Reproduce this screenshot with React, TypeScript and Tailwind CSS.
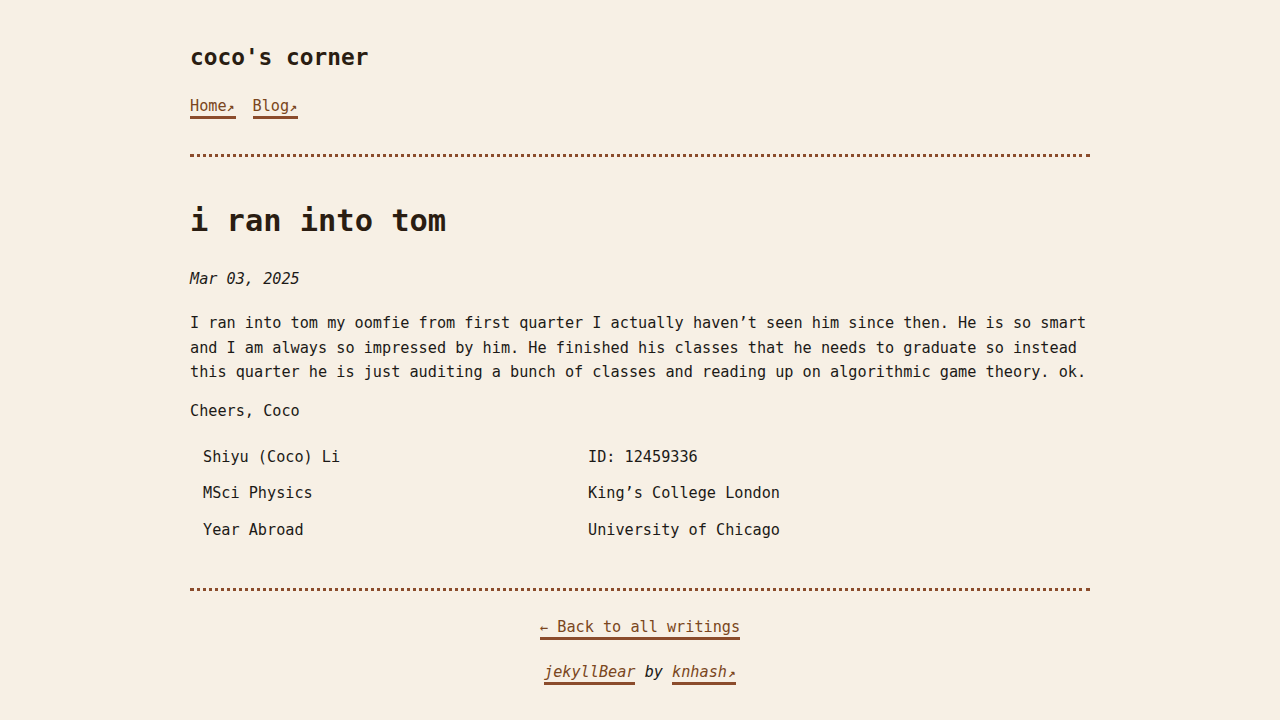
const rows = [
  ["Shiyu (Coco) Li", "ID: 12459336"],
  ["MSci Physics", "King’s College London"],
  ["Year Abroad", "University of Chicago"],
];

function Arrow() {
  return <span className="inline-block w-[9px] text-[12.5px] font-bold">↗</span>;
}

export default function App() {
  return (
    <div
      className="min-h-[720px] bg-[#f7f0e5] text-[#1c1a17] text-[15.2px] leading-[24px]"
      style={{ fontFamily: '"DejaVu Sans Mono", "Liberation Mono", monospace' }}
    >
      <div className="mx-auto w-[900px] pt-[44px]">
        <header>
          <h1 className="text-[22.8px] leading-[27px] font-bold text-[#2a1d12]">coco's corner</h1>
          <nav className="mt-[23px]">
            <a className="text-[#7a4620] border-b-[3px] border-[#8b4c2c] pb-[1px]">
              Home<Arrow />
            </a>
            <a className="ml-[17px] text-[#7a4620] border-b-[3px] border-[#8b4c2c] pb-[1px]">
              Blog<Arrow />
            </a>
          </nav>
        </header>

        <div className="mt-[35px] border-t-[3px] border-dotted border-[#8b4c2c]" />

        <main>
          <h2 className="mt-[46px] text-[30.4px] leading-[36px] font-bold text-[#2a1d12]">i ran into tom</h2>
          <p className="mt-[28px] italic">Mar 03, 2025</p>
          <p className="mt-[20px] leading-[24.5px]">
            I ran into tom my oomfie from first quarter I actually haven’t seen him since then. He is so smart and I
            am always so impressed by him. He finished his classes that he needs to graduate so instead this quarter
            he is just auditing a bunch of classes and reading up on algorithmic game theory. ok.
          </p>
          <p className="mt-[14px]">Cheers, Coco</p>

          <div className="mt-[16px] grid grid-cols-[386px_1fr]">
            {rows.map(([a, b]) => (
              <div key={a} className="contents">
                <div className="h-[36.5px] flex items-center pl-[13px]">{a}</div>
                <div className="h-[36.5px] flex items-center pl-[12px]">{b}</div>
              </div>
            ))}
          </div>
        </main>

        <div className="mt-[40px] border-t-[3px] border-dotted border-[#8b4c2c]" />

        <footer className="text-center pb-[30px]">
          <p className="mt-[24px]">
            <a className="text-[#7a4620] border-b-[3px] border-[#8b4c2c] pb-[1px]">
              <span className="text-[0.9em]">←</span> Back to all writings
            </a>
          </p>
          <p className="mt-[21px] italic">
            <a className="text-[#7a4620] border-b-[3px] border-[#8b4c2c] pb-[1px]">jekyllBear</a> by{" "}
            <a className="text-[#7a4620] border-b-[3px] border-[#8b4c2c] pb-[1px]">
              knhash<Arrow />
            </a>
          </p>
        </footer>
      </div>
    </div>
  );
}
